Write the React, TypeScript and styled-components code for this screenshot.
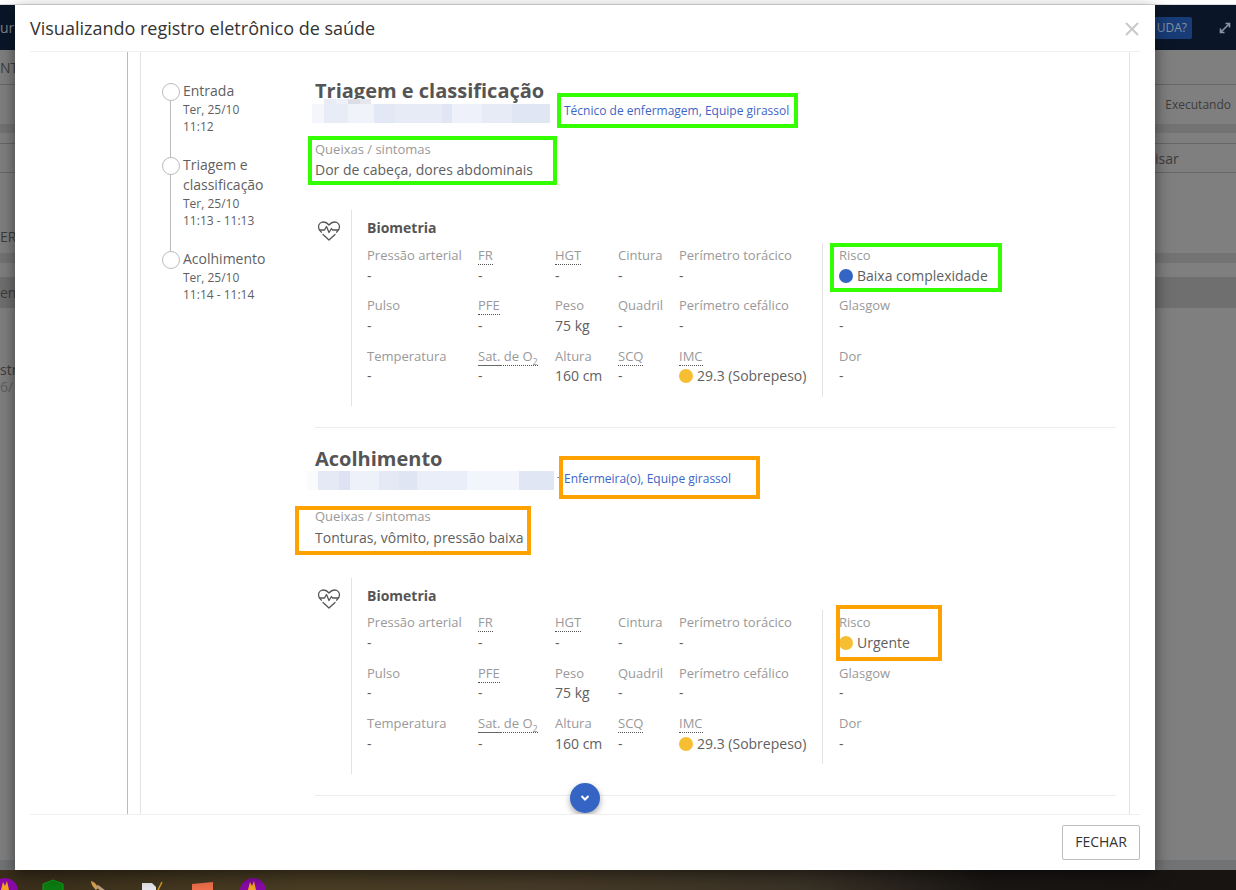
import React from "react";
import styled, { createGlobalStyle } from "styled-components";

const Global = createGlobalStyle`
  html, body { margin: 0; padding: 0; background: #fff; }
  body { font-family: "Open Sans", "Liberation Sans", sans-serif; overflow: hidden; }
  * { box-sizing: border-box; }
`;

const Screen = styled.div`
  position: relative; width: 1236px; height: 890px; overflow: hidden;
  display: flex; flex-direction: column; background: #f3f3f3;
`;
const ChromeLine = styled.div`height: 5px; background: #fff; border-bottom: 1px solid #dcdcdc; flex: none;`;

/* Dimmed application behind the modal */
const AppPage = styled.div`
  flex: 1; display: flex; flex-direction: column; background: #7f7f7f; color: #3c3c3c; font-size: 14px;
`;
const TopBar = styled.div`
  height: 45px; background: #0a1628; color: #7d8794; display: flex; align-items: center;
  justify-content: space-between; padding-right: 4px; font-size: 14px; flex: none;
`;
const TopRight = styled.div`display: flex; align-items: center; gap: 26px;`;
const HelpButton = styled.div`
  width: 60px; height: 22px; background: #183c78; border-radius: 2px; color: #85909f;
  font-size: 12px; line-height: 22px; text-align: right; padding-right: 5px;
`;
const AppRow = styled.div<{ $h: number; $line?: boolean; $bg?: string; $pad?: number }>`
  height: ${p => p.$h}px; flex: none; display: flex; align-items: center; justify-content: space-between;
  padding-left: ${p => p.$pad ?? 0}px; padding-right: 5px;
  background: ${p => p.$bg ?? "transparent"};
  border-bottom: ${p => (p.$line ? "1px solid #666" : "0")};
`;
const AppStatus = styled.span`font-size: 12px;`;
const AppMuted = styled.span`color: #5e5e5e;`;
const AppGrow = styled.div`flex: 1;`;

/* Desktop strip */
const Desktop = styled.div`
  height: 20px; flex: none;
  background: linear-gradient(90deg, #3a2e1a 0%, #4a3d24 25%, #463a28 45%, #3a3226 65%, #191614 80%, #171412 100%);
  display: flex;
`;
const DeskIcon = styled.svg`display: block; flex: none; width: 300px; height: 20px;`;

/* Modal */
const Modal = styled.div`
  position: absolute; left: 15px; top: 5px; width: 1140px; height: 865px; background: #fff;
  box-shadow: 0 5px 15px rgba(0, 0, 0, .5); padding: 0 15px; display: flex; flex-direction: column;
`;
const ModalHead = styled.header`
  height: 47px; flex: none; border-bottom: 1px solid #efefef; display: flex; align-items: center;
  justify-content: space-between; padding-right: 1px;
`;
const ModalTitle = styled.h1`margin: 0; font-size: 18px; font-weight: 400; color: #333; line-height: 46px;`;
const CloseIcon = styled.svg`display: block; width: 14px; height: 14px; margin-top: 1px; stroke: #c9c9c9; stroke-width: 2; fill: none;`;
const ModalBody = styled.div`flex: 1; min-height: 0; overflow: hidden; padding-left: 97px; position: relative;`;
const OuterRule = styled.div`height: 100%; border-left: 1px solid #bbb; padding-left: 12px;`;
const InnerPanel = styled.div`
  height: 100%; width: 990px; border-left: 1px solid #e3e3e3; border-right: 1px solid #e3e3e3;
  display: flex; padding: 0 13px 0 21px; overflow: hidden;
`;

const Timeline = styled.ol`
  list-style: none; margin: 29px 0 0; padding: 0; width: 153px; flex: none; display: flex; flex-direction: column;
`;
const Step = styled.li<{ $last?: boolean }>`
  position: relative; padding-left: 21px; padding-bottom: ${p => (p.$last ? 0 : 20)}px;
  &::before {
    content: ""; position: absolute; left: 0; top: 2px; width: 16px; height: 16px; border-radius: 50%;
    border: 1px solid #bbb; background: #fff; z-index: 1;
  }
  &::after {
    content: ""; display: ${p => (p.$last ? "none" : "block")}; position: absolute; left: 8px; top: 10px; bottom: -10px;
    width: 1px; background: #bbb;
  }
`;
const StepName = styled.div`font-size: 14px; line-height: 20px; color: #5f5f5f;`;
const StepTime = styled.div`font-size: 12px; line-height: 17px; color: #5f5f5f;`;

const Main = styled.main`flex: 1; min-width: 0; padding-top: 25px;`;
const Section = styled.section<{ $h: number }>`
  height: ${p => p.$h}px; border-bottom: 1px solid #ececec; margin-bottom: 17px; flex: none;
`;
const SectionTitle = styled.h2<{ $h: number }>`
  margin: 0; font-size: 20px; font-weight: 700; line-height: 28px; color: #555; height: ${p => p.$h}px;
`;
const AuthorRow = styled.div`display: flex; align-items: center; height: 22px; position: relative;`;
const Blur = styled.div<{ $w: number; $ml: number; $mt: number; $bands: string }>`
  position: relative; align-self: flex-start;
  width: ${p => p.$w}px; height: 19px; margin-left: ${p => p.$ml}px; margin-top: ${p => p.$mt}px; flex: none;
  background: ${p => p.$bands};
`;
const BlurCap = styled.div`
  position: absolute; left: 12px; top: -5px; width: 47px; height: 5px;
  background: linear-gradient(90deg, #e8ecf7 0 12px, #eef1f9 12px 24px, #dcdde5 24px 36px, #e6e7ec 36px 47px);
`;
const Dash = styled.span<{ $w: number }>`font-size: 12px; line-height: 18px; color: #777; width: ${p => p.$w}px; padding-left: 3px; flex: none;`;
const Role = styled.span`font-size: 12px; line-height: 18px; color: #3d66c4;`;

/* Coloured annotation rectangles that were painted over the screenshot */
const Marked = styled.span<{ $c: string; $t: number; $r: number; $b: number; $l: number }>`
  position: relative; display: inline-block;
  &::after {
    content: ""; position: absolute; pointer-events: none;
    top: ${p => -p.$t}px; right: ${p => -p.$r}px; bottom: ${p => -p.$b}px; left: ${p => -p.$l}px;
    border: 4px solid ${p => p.$c};
  }
`;
const Complaints = styled.div<{ $mt: number; $h: number }>`margin-top: ${p => p.$mt}px; height: ${p => p.$h}px;`;
const FieldLabel = styled.div`font-size: 13px; line-height: 20px; color: #999;`;
const FieldValue = styled.div<{ $lh?: number }>`font-size: 14px; line-height: ${p => p.$lh ?? 20}px; color: #5f5f5f;`;
const AbbrLabel = styled.abbr`
  display: block; position: relative; width: fit-content; height: 20px; font-size: 13px; line-height: 20px; color: #999;
  text-decoration: none; border-bottom: 1px dotted #555;
  sub { font-size: 9px; line-height: 0; }
`;
const SolidPart = styled.span`position: absolute; left: 0; bottom: -1px; width: 24px; height: 1px; background: #666;`;

const Bio = styled.div`display: flex; margin-top: 30px;`;
const BioIconCell = styled.div`width: 37px; height: 196px; flex: none; border-right: 1px solid #e3e3e3; padding: 10px 0 0 2px;`;
const BioIcon = styled.svg`display: block; width: 24px; height: 22px; fill: none; stroke: #555; stroke-width: 1.3; stroke-linejoin: round; stroke-linecap: round;`;
const BioBody = styled.div`padding-left: 15px; flex: 1;`;
const BioTitle = styled.h3`margin: 8px 0 7px; font-size: 14px; line-height: 20px; font-weight: 700; color: #555;`;
const BioGrid = styled.div<{ $shift: number }>`
  display: grid; grid-template-columns: 111px 77px 63px 61px 143px 17px auto;
  grid-auto-rows: 50.4px; margin-top: ${p => p.$shift}px;
`;
const Cell = styled.div`
  ${FieldValue} { margin-top: 0.5px; }
`;
const Divider = styled.div`grid-column: 6; grid-row: 1 / 4; border-left: 1px solid #e3e3e3; margin-top: -2px; height: 154px;`;
const Dot = styled.i<{ $c: string }>`
  display: inline-block; width: 14px; height: 14px; border-radius: 50%; background: ${p => p.$c};
  vertical-align: -2px; margin-right: 4px;
`;
const ScrollDown = styled.button`
  position: absolute; left: 540px; top: 731px; width: 30px; height: 30px; border: 0; padding: 0; border-radius: 50%;
  background: #3565c4; box-shadow: 0 3px 6px rgba(0, 0, 0, .35); display: flex; align-items: center; justify-content: center;
`;
const Chevron = styled.svg`display: block; width: 10px; height: 10px; fill: none; stroke: #fff; stroke-width: 2;`;
const ModalFoot = styled.footer`
  height: 56px; flex: none; border-top: 1px solid #efefef; display: flex; justify-content: flex-end;
  align-items: flex-start; padding: 10px 0 0;
`;
const CloseButton = styled.button`
  width: 78px; height: 35px; background: #fff; border: 1px solid #bdbdbd; border-radius: 2px;
  font: 400 14px/31px "Open Sans", sans-serif; color: #333; padding: 0 0 2px;
`;

const GREEN = "#33ff00";
const ORANGE = "#ffa200";

const bandsA = "linear-gradient(90deg,#f4f6fb 0 12px,#e8ecf7 12px 36px,#f0f3fa 36px 62px,#e2e8f5 62px 82px,#e6ebf6 82px 130px,#e0e6f4 130px 140px,#eef1f9 140px 170px,#e6ebf6 170px 200px,#e0e6f4 200px 238px)";
const bandsB = "linear-gradient(90deg,#fafbfd 0 11px,#e4e9f5 11px 32px,#dde3f2 32px 43px,#eef1f9 43px 72px,#e4e9f5 72px 92px,#dfe5f3 92px 110px,#eaeef8 110px 160px,#f2f5fc 160px 212px,#e0e6f4 212px 247px)";

type Col = { label: string; abbr?: boolean; value: React.ReactNode };

const Label = ({ c }: { c: Col }) =>
  c.abbr ? (
    <AbbrLabel>
      {c.label === "Sat. de O2" ? <>Sat. de O<sub>2</sub><SolidPart /></> : c.label}
    </AbbrLabel>
  ) : (
    <FieldLabel>{c.label}</FieldLabel>
  );

const Field = ({ c }: { c: Col }) => (
  <Cell>
    <Label c={c} />
    <FieldValue>{c.value}</FieldValue>
  </Cell>
);

const Heart = () => (
  <BioIcon viewBox="0 0 24 22">
    <path d="M4.5 12.2C2.6 10.8 1.5 9 1.5 7c0-3 2.3-5 5-5 2.100 0 3.900 1 5.500 3 1.600-2 3.400-3 5.500-3 2.700 0 5 2 5 5 0 2-1.100 3.800-3 5.200" />
    <path d="M6 14.500 12 20l6-5.500" />
    <path d="M3 10h4.500l2-3.500 2.500 6 2.500-4 1 1.500H21" />
  </BioIcon>
);

function Biometry({ risk, shift }: { risk: React.ReactNode; shift: number }) {
  const a: Col[] = [
    { label: "Pressão arterial", value: "-" }, { label: "FR", abbr: true, value: "-" }, { label: "HGT", abbr: true, value: "-" },
    { label: "Cintura", value: "-" }, { label: "Perímetro torácico", value: "-" },
  ];
  const b: Col[] = [
    { label: "Pulso", value: "-" }, { label: "PFE", abbr: true, value: "-" }, { label: "Peso", value: "75 kg" },
    { label: "Quadril", value: "-" }, { label: "Perímetro cefálico", value: "-" },
  ];
  const c: Col[] = [
    { label: "Temperatura", value: "-" }, { label: "Sat. de O2", abbr: true, value: "-" }, { label: "Altura", value: "160 cm" },
    { label: "SCQ", abbr: true, value: "-" },
    { label: "IMC", abbr: true, value: <><Dot $c="#f6bf33" />29.3 (Sobrepeso)</> },
  ];
  return (
    <Bio>
      <BioIconCell><Heart /></BioIconCell>
      <BioBody>
        <BioTitle>Biometria</BioTitle>
        <BioGrid $shift={shift}>
          {a.map(x => <Field key={x.label} c={x} />)}
          <Divider />
          {risk}
          {b.map(x => <Field key={x.label} c={x} />)}
          <Field c={{ label: "Glasgow", value: "-" }} />
          {c.map(x => <Field key={x.label} c={x} />)}
          <Field c={{ label: "Dor", value: "-" }} />
        </BioGrid>
      </BioBody>
    </Bio>
  );
}

export default function App() {
  return (
    <Screen>
      <Global />
      <ChromeLine />
      <AppPage>
        <TopBar>
          <span>ur</span>
          <TopRight>
            <HelpButton>UDA?</HelpButton>
            <svg width="14" height="14" viewBox="0 0 14 14" fill="none" stroke="#8a94a3" strokeWidth="1.600">
              <path d="M3 11 11 3M7.500 2.500h4v4M2.500 7.500v4h4" />
            </svg>
          </TopRight>
        </TopBar>
        <AppRow $h={35} $line><span>NT</span></AppRow>
        <AppRow $h={39}><span /><AppStatus>Executando</AppStatus></AppRow>
        <AppRow $h={9} $bg="#737373" />
        <AppRow $h={11} $line />
        <AppRow $h={29} $line $pad={1155}><span>isar</span></AppRow>
        <AppRow $h={54} />
        <AppRow $h={18}><span>ERV</span></AppRow>
        <AppRow $h={8} />
        <AppRow $h={10} $bg="#737373" />
        <AppRow $h={14} />
        <AppRow $h={31} $bg="#6f6f6f"><span>en</span></AppRow>
        <AppRow $h={53} />
        <AppRow $h={17}><span>str</span></AppRow>
        <AppRow $h={17}><AppMuted>6/1</AppMuted></AppRow>
        <AppGrow />
        <AppRow $h={10} $bg="#727375" />
      </AppPage>
      <Desktop>
        <DeskIcon viewBox="0 0 300 20">
          <circle cx="5" cy="21" r="13" fill="#8a0aa8" />
          <path d="M1 20l2-8 2 4 2-5 2 9z" fill="#f5a623" />
          <path d="M43 14l10-4 10 4v10H43z" fill="#0c7d12" stroke="#0aa514" />
          <path d="M91 11c4 1 6 4 7 7l-2 2c-2-2-5-5-5-9z" fill="#d9a450" />
          <path d="M97 16l8 6" stroke="#b8a080" strokeWidth="3" />
          <path d="M142 13h10l4 4v6h-14z" fill="#e8e8ee" />
          <path d="M158 20l4-8" stroke="#d8a020" strokeWidth="1.500" />
          <path d="M192 14l21-2v10h-21z" fill="#f0704c" />
          <circle cx="253" cy="21" r="13" fill="#8a0aa8" />
          <path d="M248 20l2-8 2 4 2-5 2 9z" fill="#f5a623" />
        </DeskIcon>
      </Desktop>

      <Modal>
        <ModalHead>
          <ModalTitle>Visualizando registro eletrônico de saúde</ModalTitle>
          <CloseIcon viewBox="0 0 14 14"><path d="M1 1l12 12M13 1 1 13" /></CloseIcon>
        </ModalHead>
        <ModalBody>
          <OuterRule>
            <InnerPanel>
              <Timeline>
                <Step>
                  <StepName>Entrada</StepName>
                  <StepTime>Ter, 25/10</StepTime>
                  <StepTime>11:12</StepTime>
                </Step>
                <Step>
                  <StepName>Triagem e classificação</StepName>
                  <StepTime>Ter, 25/10</StepTime>
                  <StepTime>11:13 - 11:13</StepTime>
                </Step>
                <Step $last>
                  <StepName>Acolhimento</StepName>
                  <StepTime>Ter, 25/10</StepTime>
                  <StepTime>11:14 - 11:14</StepTime>
                </Step>
              </Timeline>
              <Main>
                <Section $h={351}>
                  <SectionTitle $h={21}>Triagem e classificação</SectionTitle>
                  <AuthorRow>
                    <Blur $w={238} $ml={-3} $mt={6} $bands={bandsA}><BlurCap /></Blur>
                    <Dash $w={14} />
                    <Marked $c={GREEN} $t={5} $r={9} $b={8} $l={7}>
                      <Role>Técnico de enfermagem, Equipe girassol</Role>
                    </Marked>
                  </AuthorRow>
                  <Complaints $mt={19} $h={41}>
                    <Marked $c={GREEN} $t={3} $r={24} $b={5} $l={7}>
                      <FieldLabel>Queixas / sintomas</FieldLabel>
                      <FieldValue $lh={21}>Dor de cabeça, dores abdominais</FieldValue>
                    </Marked>
                  </Complaints>
                  <Biometry
                    shift={0}
                    risk={
                      <Cell>
                        <Marked $c={GREEN} $t={2} $r={14} $b={6} $l={9}>
                          <FieldLabel>Risco</FieldLabel>
                          <FieldValue><Dot $c="#3565c4" />Baixa complexidade</FieldValue>
                        </Marked>
                      </Cell>
                    }
                  />
                </Section>
                <Section $h={351}>
                  <SectionTitle $h={21}>Acolhimento</SectionTitle>
                  <AuthorRow>
                    <Blur $w={247} $ml={-8} $mt={5} $bands={bandsB} />
                    <Dash $w={10}>-</Dash>
                    <Marked $c={ORANGE} $t={10} $r={29} $b={11} $l={5}>
                      <Role>Enfermeira(o), Equipe girassol</Role>
                    </Marked>
                  </AuthorRow>
                  <Complaints $mt={18} $h={42}>
                    <Marked $c={ORANGE} $t={0} $r={7} $b={6} $l={20}>
                      <FieldLabel>Queixas / sintomas</FieldLabel>
                      <FieldValue $lh={23}>Tonturas, vômito, pressão baixa</FieldValue>
                    </Marked>
                  </Complaints>
                  <Biometry
                    shift={-0.6}
                    risk={
                      <Cell>
                        <Marked $c={ORANGE} $t={7} $r={32} $b={8} $l={3}>
                          <FieldLabel>Risco</FieldLabel>
                          <FieldValue><Dot $c="#f6bf33" />Urgente</FieldValue>
                        </Marked>
                      </Cell>
                    }
                  />
                </Section>
              </Main>
            </InnerPanel>
          </OuterRule>
          <ScrollDown aria-label="Rolar para baixo">
            <Chevron viewBox="0 0 10 10"><path d="M1.500 3 5 6.500 8.500 3" /></Chevron>
          </ScrollDown>
        </ModalBody>
        <ModalFoot>
          <CloseButton>FECHAR</CloseButton>
        </ModalFoot>
      </Modal>
    </Screen>
  );
}
